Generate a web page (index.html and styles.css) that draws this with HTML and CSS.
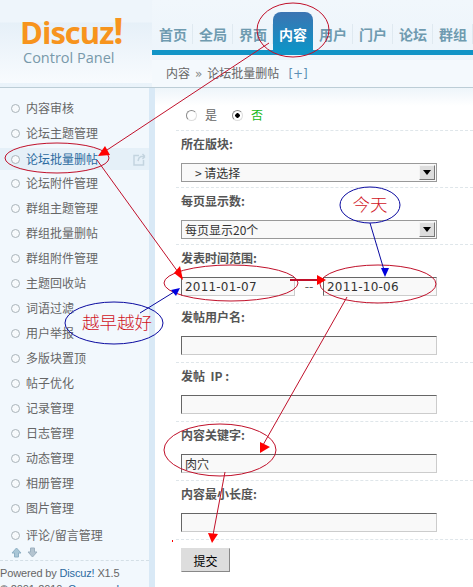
FILE: index.html
```html
<!DOCTYPE html>
<html lang="zh-CN">
<head>
    <meta charset="UTF-8">
    <meta name="viewport" content="width=device-width, initial-scale=1.0">
    <title>论坛批量删帖</title>
    <link rel="stylesheet" href="styles.css">
</head>
<body>
    <div class="page">
        <header class="top">
            <div class="logo">
                <div class="logo_name">Discuz<span>!</span></div>
                <div class="logo_sub">Control Panel</div>
            </div>
            <div class="top_right">
                <nav class="nav">
                    <a>首页</a><a>全局</a><a>界面</a><a class="on">内容</a><a>用户</a><a>门户</a><a>论坛</a><a>群组</a>
                </nav>
                <div class="crumb">内容<span class="sep">&raquo;</span>论坛批量删帖<b>[+]</b></div>
            </div>
        </header>
        <div class="main">
            <aside class="side">
                <ul class="menu">
                    <li>内容审核</li>
                    <li>论坛主题管理</li>
                    <li class="on">论坛批量删帖
                        <svg class="ext" width="13" height="13" viewBox="0 0 13 13" fill="none" stroke="#c3d4df" stroke-width="1.5"><path d="M6 2.500H1v9.500h9.500V7"/><path d="M5 8l1-3 2-1.500h4M12 3.500L9.500 1M12 3.500L9.500 6"/></svg>
                    </li>
                    <li>论坛附件管理</li>
                    <li>群组主题管理</li>
                    <li>群组批量删帖</li>
                    <li>群组附件管理</li>
                    <li>主题回收站</li>
                    <li>词语过滤</li>
                    <li>用户举报</li>
                    <li>多版块置顶</li>
                    <li>帖子优化</li>
                    <li>记录管理</li>
                    <li>日志管理</li>
                    <li>动态管理</li>
                    <li>相册管理</li>
                    <li>图片管理</li>
                    <li class="last">评论/留言管理</li>
                </ul>
                <div class="updown">
                    <svg width="11" height="11" viewBox="0 0 11 11"><path d="M5.500 1L10 6H7.500v4h-4V6H1z" fill="#a9c6d6" stroke="#8fb0c4"/></svg>
                    <svg width="11" height="11" viewBox="0 0 11 11"><path d="M5.500 10L10 5H7.500V1h-4v4H1z" fill="#b4c4d0" stroke="#9db1c0"/></svg>
                </div>
                <div class="powered">
                    <p>Powered by <a>Discuz!</a> X1.5</p>
                    <p>&copy; 2001-2010, <a>Comsenz Inc.</a></p>
                </div>
            </aside>
            <main class="content">
                <div class="radios">
                    <span class="radio"></span><span class="radio_txt">是</span>
                    <span class="radio checked"></span><span class="radio_txt yes">否</span>
                </div>
                <div class="row short">
                    <label>所在版块:</label>
                    <div class="select"><span class="indent">&gt; 请选择</span><i></i></div>
                </div>
                <div class="row short">
                    <label>每页显示数:</label>
                    <div class="select"><span>每页显示20个</span><i></i></div>
                </div>
                <div class="row">
                    <label>发表时间范围:</label>
                    <div class="dates">
                        <input class="text" value="2011-01-07"><span>--</span><input class="text" value="2011-10-06">
                    </div>
                </div>
                <div class="row">
                    <label>发帖用户名:</label>
                    <input class="text">
                </div>
                <div class="row">
                    <label>发帖&nbsp; IP :</label>
                    <input class="text">
                </div>
                <div class="row">
                    <label>内容关键字:</label>
                    <input class="text" value="肉穴">
                </div>
                <div class="row">
                    <label>内容最小长度:</label>
                    <input class="text">
                </div>
                <div class="row_end">
                    <button class="submit">提交</button>
                </div>
            </main>
        </div>

        <!-- 红蓝标注 -->
        <svg class="notes" width="473" height="587" viewBox="0 0 473 587" fill="none">
            <g stroke="#c0102a" stroke-width="1">
                <ellipse cx="293" cy="30" rx="36" ry="27"/>
                <ellipse cx="57" cy="158" rx="52" ry="15"/>
                <ellipse cx="231" cy="283" rx="67" ry="18"/>
                <ellipse cx="378" cy="284" rx="58" ry="19"/>
                <ellipse cx="220" cy="450" rx="56" ry="26"/>
                <path d="M269 43L104 152"/>
                <path d="M97 160L178 272"/>
                <path d="M347 297L263 445"/>
                <path d="M225 472L213 535"/>
                <path d="M290 280H320" stroke-width="2"/>
            </g>
            <g fill="#f00">
                <path d="M98 156L105 146L110 155z"/>
                <path d="M183 280L174 273L180 266z"/>
                <path d="M326 280L317 275V285z"/>
                <path d="M260 453L260 442L270 447z"/>
                <path d="M212 543L208 533L218 534z"/>
                <rect x="172" y="540" width="1" height="2"/>
            </g>
            <g stroke="#0a0aa0" stroke-width="1">
                <ellipse cx="370" cy="205" rx="30" ry="18"/>
                <ellipse cx="114" cy="323" rx="49" ry="21"/>
                <path d="M370 223L384 270"/>
                <path d="M140 313L174 292"/>
            </g>
            <g fill="#00d">
                <path d="M385 277L381 268L389 268z"/>
                <path d="M180 288L171 290L176 296z"/>
            </g>
            <text class="note_txt" x="370" y="211">今天</text>
            <text class="note_txt" x="117" y="329">越早越好</text>
        </svg>
    </div>
</body>
</html>
```

FILE: styles.css
```css
* {
    margin: 0;
    padding: 0;
    box-sizing: border-box;
}
html, body {
    width: 473px;
    height: 587px;
    overflow: hidden;
    background-color: white;
}
body {
    font-family: "DejaVu Sans", "Noto Sans CJK SC", sans-serif;
    font-size: 12px;
    color: #666;
}
.page {
    position: relative;
    width: 473px;
    height: 587px;
    overflow: hidden;
}
.top {
    height: 88px;
    display: flex;
    background: linear-gradient(#f1f7fc, #eaf3fa);
    border-bottom: 1px solid #bccdd6;
}
.logo {
    width: 155px;
    height: 83px;
    padding: 15px 0 0 20px;
    background: linear-gradient(#eef5fb 0, #eef5fb 22px, #e6f0f8 23px, #f8fbfe 100%);
}
.logo_name {
    font-family: "Open Sans", sans-serif;
    font-weight: 700;
    font-size: 31px;
    line-height: 34px;
    letter-spacing: -1px;
    color: #f7941d;
}
.logo_name span {
    font-size: 36px;
    line-height: 30px;
}
.logo_sub {
    font-family: "Open Sans", sans-serif;
    font-size: 14.5px;
    line-height: 17px;
    margin-left: 3px;
    color: #7899aa;
}
.top_right {
    flex-grow: 1;
}
.nav {
    height: 55px;
    padding: 12px 0 0 1px;
    display: flex;
    white-space: nowrap;
    border-bottom: 5px solid #0f93c6;
}
.nav a {
    flex: 0 0 40px;
    height: 38px;
    padding-top: 12px;
    text-align: center;
    font-family: "Noto Sans CJK SC", sans-serif;
    font-weight: 700;
    font-size: 14px;
    line-height: 20px;
    color: #6f9bb0;
    background: linear-gradient(#dfe9f0, #dfe9f0) no-repeat right 12px / 1px 20px;
}
.nav a.on {
    color: white;
    border-radius: 8px 8px 0 0;
    background: linear-gradient(#3b74b2, #0f93c6);
}
.crumb {
    height: 27px;
    margin-top: 5px;
    padding-left: 14px;
    font-family: "Noto Sans CJK SC", sans-serif;
    line-height: 26px;
    background-color: #f4f9fd;
    white-space: nowrap;
}
.crumb .sep {
    margin: 0 5px;
    font-family: "DejaVu Sans", sans-serif;
    color: #888;
}
.crumb b {
    margin-left: 9px;
    font-weight: 400;
    font-family: "DejaVu Sans", sans-serif;
    color: #5d8fb4;
}
.main {
    display: flex;
    height: 499px;
}
.side {
    width: 155px;
    flex-shrink: 0;
    background-color: #f2f8fd;
    border-right: 6px solid #d9e9f6;
    padding-top: 7px;
}
.menu {
    list-style: none;
}
.menu li {
    position: relative;
    height: 25px;
    padding-left: 26px;
    font-family: "Noto Sans CJK SC", sans-serif;
    line-height: 25px;
    white-space: nowrap;
}
.menu li::before {
    content: "";
    position: absolute;
    left: 11px;
    top: 9px;
    width: 7px;
    height: 7px;
    border-radius: 50%;
    border: 1px solid #aab4ba;
    background-color: #f7fafc;
}
.menu li.on {
    height: 22px;
    margin-top: 3px;
    line-height: 21px;
    color: #2b6a9f;
    background-color: #e5f0f8;
}
.menu li.on::before {
    top: 7px;
}
.menu li.last {
    margin-top: 2px;
}
.ext {
    position: absolute;
    left: 133px;
    top: 5px;
}
.updown {
    height: 13px;
    padding-left: 11px;
    display: flex;
    gap: 5px;
}
.powered {
    padding-top: 4px;
    border-top: 1px dashed #d4dfe6;
    font-family: "Liberation Sans", sans-serif;
    font-size: 11px;
    letter-spacing: -0.15px;
    line-height: 16px;
    white-space: nowrap;
}
.powered a {
    color: #2b6a9f;
}
.content {
    flex-grow: 1;
    padding-left: 26px;
    background: linear-gradient(#eef5fa, white 18px);
}
.radios {
    height: 42px;
    margin-left: -5px;
    padding: 20px 0 0 10px;
    display: flex;
    align-items: flex-start;
    font-family: "Noto Sans CJK SC", sans-serif;
    line-height: 14px;
}
.radio {
    width: 11px;
    height: 11px;
    margin: 2px 8px 0 0;
    border-radius: 50%;
    border: 1px solid;
    border-color: #8a8a8a #ddd #ddd #8a8a8a;
    background-color: white;
}
.radio.checked {
    background: radial-gradient(circle, black 2px, white 2.5px);
}
.radio_txt {
    width: 27px;
}
.radio_txt.yes {
    color: #17b917;
}
.row {
    height: 59px;
    margin-left: -5px;
    padding: 5px 0 0 5px;
    border-top: 1px dashed #dfe6ea;
}
.row.short {
    height: 57px;
}
.row label {
    display: block;
    height: 27px;
    font-family: "Noto Sans CJK SC", sans-serif;
    font-weight: 700;
    line-height: 15px;
    color: #555;
}
.row_end {
    margin-left: -5px;
    padding: 8px 0 0 5px;
    border-top: 1px dashed #dfe6ea;
}
.select {
    width: 256px;
    height: 19px;
    display: flex;
    justify-content: space-between;
    border: 1px solid #999;
    background-color: #f9f9f9;
    font-family: "Noto Sans CJK SC", sans-serif;
    color: #333;
    line-height: 17px;
    padding-left: 3px;
}
.select .indent {
    padding-left: 10px;
}
.select i {
    position: relative;
    width: 16px;
    height: 15px;
    margin: 1px;
    background-color: #ddd;
    border: 1px solid;
    border-color: #f4f4f4 #777 #777 #f4f4f4;
}
.select i::after {
    content: "";
    position: absolute;
    left: 3px;
    top: 4px;
    border: 4px solid transparent;
    border-top: 5px solid black;
    border-bottom: 0;
}
.text {
    display: block;
    width: 256px;
    height: 19px;
    padding: 0 3px;
    border: 1px solid;
    border-color: #666 #ccc #ccc #666;
    background-color: #f9f9f9;
    font-family: "DejaVu Sans", "Noto Sans CJK SC", sans-serif;
    font-size: 12px;
    color: #333;
    border-radius: 0;
    outline: none;
}
.dates {
    display: flex;
    align-items: center;
    color: #666;
}
.dates .text {
    width: 114px;
    letter-spacing: 0.2px;
}
.dates span {
    width: 28px;
    text-align: center;
}
.submit {
    display: block;
    width: 49px;
    height: 24px;
    border: 1px solid;
    border-color: #ddd #888 #888 #ddd;
    background-color: #ddd;
    font-family: "Noto Sans CJK SC", sans-serif;
    font-size: 12px;
    color: black;
    border-radius: 0;
}
.notes {
    position: absolute;
    left: 0;
    top: 0;
}
.note_txt {
    font-family: "Noto Sans CJK SC", sans-serif;
    font-size: 17.5px;
    font-weight: 300;
    fill: #d0141e;
    text-anchor: middle;
}
```
